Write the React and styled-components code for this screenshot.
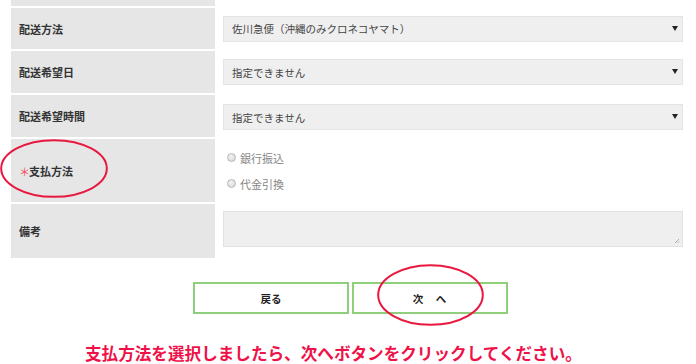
import styled, { createGlobalStyle } from "styled-components";

const GlobalStyle = createGlobalStyle`
  html, body {
    margin: 0;
    padding: 0;
    background: #ffffff;
  }
  body {
    font-family: "Noto Sans CJK JP", "Noto Sans", sans-serif;
    color: #333333;
    overflow: hidden;
  }
`;

const Page = styled.div`
  width: 696px;
  height: 364px;
  overflow: hidden;
  position: relative;
`;

const Form = styled.div`
  display: grid;
  grid-template-columns: 204px 476px;
  row-gap: 2px;
  margin-left: 11px;
`;

const Label = styled.div`
  position: relative;
  background: #e6e6e6;
  height: ${(p) => p.$h}px;
  display: flex;
  align-items: center;
  padding-left: 8px;
  font-size: 11px;
  font-weight: 700;
  color: #333333;
`;

const Value = styled.div`
  height: ${(p) => p.$h}px;
  display: flex;
  flex-direction: column;
  justify-content: center;
  padding: 0 8px;
  gap: ${(p) => p.$gap || 0}px;
`;

const Required = styled.span`
  color: #f04a5e;
  font-weight: 400;
  margin-left: 3px;
  margin-right: -1px;
`;

const Select = styled.div`
  position: relative;
  height: 26px;
  box-sizing: border-box;
  background: #efefef;
  border: 1px solid #e4e4e4;
  display: flex;
  align-items: center;
  padding-left: 8px;
  font-size: 10.5px;
  color: #444444;
  margin-top: ${(p) => p.$mt || 0}px;
`;

const Arrow = styled.span`
  position: absolute;
  right: 4px;
  top: 9px;
  width: 0;
  height: 0;
  border-left: 3px solid transparent;
  border-right: 3px solid transparent;
  border-top: 5px solid #222222;
`;

const RadioRow = styled.label`
  display: flex;
  align-items: center;
  gap: 4px;
  font-size: 11px;
  color: #888888;
  margin-left: 4px;
`;

const RadioDot = styled.span`
  width: 9px;
  height: 9px;
  border-radius: 50%;
  box-sizing: border-box;
  border: 1px solid #b8b8b8;
  background: radial-gradient(circle at 40% 35%, #f4f4f4, #d2d2d2);
`;

const TextArea = styled.div`
  position: relative;
  height: 36px;
  box-sizing: border-box;
  background: #efefef;
  border: 1px solid #e2e2e2;
  margin-top: -4px;
`;

const Grip = styled.svg`
  position: absolute;
  right: 2px;
  bottom: 2px;
`;

const Buttons = styled.div`
  display: flex;
  gap: 3px;
  margin: 24px 0 0 193px;
  position: relative;
`;

const Button = styled.div`
  width: 156px;
  height: 32px;
  box-sizing: border-box;
  border: 2px solid #8fce7b;
  background: #ffffff;
  display: flex;
  align-items: center;
  justify-content: center;
  font-size: 10.5px;
  font-weight: 700;
  color: #222222;
  letter-spacing: ${(p) => p.$ls || 0}px;
`;

const Note = styled.div`
  margin: 29px 0 0 85px;
  font-size: 16.6px;
  font-weight: 700;
  color: #ee1249;
  white-space: nowrap;
  line-height: 20px;
`;

const Circle = styled.svg`
  position: absolute;
  pointer-events: none;
  left: ${(p) => p.$x}px;
  top: ${(p) => p.$y}px;
`;

function Mark({ x, y, w, h }) {
  return (
    <Circle $x={x} $y={y} width={w} height={h} viewBox={`0 0 ${w} ${h}`}>
      <ellipse
        cx={w / 2}
        cy={h / 2}
        rx={w / 2 - 1.2}
        ry={h / 2 - 1.2}
        fill="none"
        stroke="#e8183f"
        strokeWidth="2"
      />
    </Circle>
  );
}

export default function App() {
  return (
    <Page>
      <GlobalStyle />
      <Form>
        <Label $h={6} />
        <Value $h={6} />

        <Label $h={41}>配送方法</Label>
        <Value $h={41}>
          <Select>
            佐川急便（沖縄のみクロネコヤマト）
            <Arrow />
          </Select>
        </Value>

        <Label $h={42}>配送希望日</Label>
        <Value $h={42}>
          <Select>
            指定できません
            <Arrow />
          </Select>
        </Value>

        <Label $h={42}>配送希望時間</Label>
        <Value $h={42}>
          <Select $mt={2}>
            指定できません
            <Arrow />
          </Select>
        </Value>

        <Label $h={63} style={{ paddingLeft: 5 }}>
          <Required>＊</Required>支払方法
        </Label>
        <Value $h={63} $gap={10}>
          <RadioRow>
            <RadioDot />
            銀行振込
          </RadioRow>
          <RadioRow>
            <RadioDot />
            代金引換
          </RadioRow>
        </Value>

        <Label $h={54}>備考</Label>
        <Value $h={54}>
          <TextArea>
            <Grip width="6" height="6" viewBox="0 0 6 6">
              <path d="M5 1 L1 5 M5 3.5 L3.5 5" stroke="#9a9a9a" strokeWidth="0.8" />
            </Grip>
          </TextArea>
        </Value>
      </Form>

      <Buttons>
        <Button>戻る</Button>
        <Button $ls={1}>次　へ</Button>
      </Buttons>

      <Note>支払方法を選択しましたら、次へボタンをクリックしてください。</Note>

      <Mark x={0} y={139} w={108} h={59} />
      <Mark x={377} y={264} w={107} h={62} />
    </Page>
  );
}
